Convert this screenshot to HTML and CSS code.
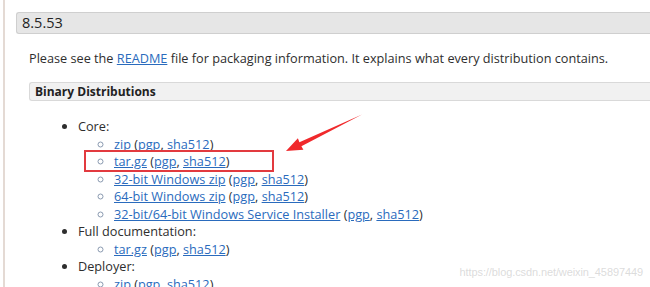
FILE: index.html
```html
<!DOCTYPE html>
<html>
<head>
<meta charset="utf-8">
<link rel="stylesheet" href="styles.css">
</head>
<body>
<div class="page">
  <h3 class="ver">8.5.53</h3>
  <div class="sec">
    <p class="intro">Please see the <a href="#">README</a> file for packaging information. It explains what every distribution contains.</p>
    <h4 class="sub">Binary Distributions</h4>
    <ul class="outer">
      <li>Core:
        <ul class="inner">
          <li><a href="#">zip</a> (<a href="#">pgp</a>, <a href="#">sha512</a>)</li>
          <li><a href="#">tar.gz</a> (<a href="#">pgp</a>, <a href="#">sha512</a>)</li>
          <li><a href="#">32-bit Windows zip</a> (<a href="#">pgp</a>, <a href="#">sha512</a>)</li>
          <li><a href="#">64-bit Windows zip</a> (<a href="#">pgp</a>, <a href="#">sha512</a>)</li>
          <li><a href="#">32-bit/64-bit Windows Service Installer</a> (<a href="#">pgp</a>, <a href="#">sha512</a>)</li>
        </ul>
      </li>
      <li>Full documentation:
        <ul class="inner">
          <li><a href="#">tar.gz</a> (<a href="#">pgp</a>, <a href="#">sha512</a>)</li>
        </ul>
      </li>
      <li>Deployer:
        <ul class="inner">
          <li><a href="#">zip</a> (<a href="#">pgp</a>, <a href="#">sha512</a>)</li>
        </ul>
      </li>
    </ul>
  </div>
</div>
<div class="mark"></div>
<svg class="arrow" width="650" height="287" viewBox="0 0 650 287">
  <polygon points="286,151 297.9,138.2 299.4,142.2 362,114.6 301.4,146.2 303.4,149.8" fill="#f0292c"/>
</svg>
<div class="wm">https://blog.csdn.net/weixin_45897449</div>
</body>
</html>
```
FILE: styles.css
```css
html, body {
  margin: 0;
  padding: 0;
  background: #fff;
  overflow: hidden;
}
body {
  width: 650px;
  height: 287px;
  position: relative;
  font-family: "Open Sans", "Liberation Sans", sans-serif;
  font-size: 12.7px;
  color: #2e2e2e;
}
.page {
  margin-left: 3px;
  border-left: 2px solid #e4dad4;
  padding: 12px 0 0 11px;
  height: 287px;
  box-sizing: border-box;
}
.ver {
  margin: 0;
  height: 22px;
  box-sizing: border-box;
  border: 1px solid #cfcfcf;
  border-right: none;
  border-radius: 3px 0 0 3px;
  background: #e6e6e6;
  padding-left: 5px;
  font-size: 14.5px;
  line-height: 20px;
  font-weight: normal;
  color: #222;
}
.sec {
  padding-left: 13px;
}
.intro {
  margin: 16px 0 0 0;
  line-height: 17.4px;
}
a {
  color: #2a6bbd;
  text-decoration: underline;
}
.sub {
  margin: 15px 0 0 0;
  height: 19px;
  box-sizing: border-box;
  border: 1px solid #d9d9d9;
  border-right: none;
  border-radius: 3px 0 0 3px;
  background: #f1f1f1;
  padding-left: 5px;
  font-size: 12px;
  line-height: 17px;
  font-weight: bold;
  color: #222;
}
.outer {
  margin: 17px 0 0 0;
  padding-left: 49px;
  line-height: 17.5px;
  list-style: disc;
}
.inner {
  margin: 0;
  padding-left: 36px;
  list-style: circle;
}
.inner li::marker {
  color: #8a9ab0;
}
.mark {
  position: absolute;
  left: 84px;
  top: 150px;
  width: 190px;
  height: 22px;
  box-sizing: border-box;
  border: 2px solid #e23a3f;
}
.arrow {
  position: absolute;
  left: 0;
  top: 0;
}
.wm {
  position: absolute;
  right: 7px;
  top: 266px;
  font-family: "Liberation Sans", Arial, sans-serif;
  font-size: 11px;
  color: rgba(190, 190, 190, 0.55);
  letter-spacing: -0.1px;
}
```
